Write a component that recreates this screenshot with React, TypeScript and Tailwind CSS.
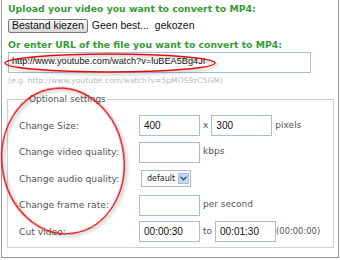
import React from "react";

const verdana = "font-['DejaVu_Sans',Verdana,sans-serif]";
const arial = "font-['Liberation_Sans',Arial,sans-serif]";

function Field({ value = "", className = "" }: { value?: string; className?: string }) {
    return (
        <div
            className={`h-[21px] w-[61px] border border-[#a7bcd6] bg-white px-[4px] flex items-center text-[10px] text-[#111] ${arial} ${className}`}
        >
            {value}
        </div>
    );
}

function Row({ label, children }: { label: string; children: React.ReactNode }) {
    return (
        <div className="flex items-center h-[26.5px]">
            <div className={`w-[120px] text-[9.2px] text-[#555] ${verdana}`}>{label}</div>
            <div className={`flex items-center gap-[3px] text-[9px] text-[#555] ${verdana}`}>{children}</div>
        </div>
    );
}

export default function App() {
    return (
        <div className="relative w-[340px] h-[260px] bg-white overflow-hidden">
            <div className="mx-[1px] h-[258px] border-x border-b border-[#9a9a9a] pl-[6px] pr-[4px]">
                <h2 className={`pt-[3px] text-[9.3px] font-bold leading-[12px] text-[#359a35] ${verdana}`}>
                    Upload your video you want to convert to MP4:
                </h2>
                <div className="mt-[3px] flex items-center gap-[4px]">
                    <button
                        className={`h-[14px] px-[3px] rounded-[2px] border border-[#777] bg-gradient-to-b from-[#fafafa] to-[#d8d8d8] text-[10.5px] leading-[11px] text-[#111] ${arial}`}
                    >
                        Bestand kiezen
                    </button>
                    <span className={`text-[10.5px] text-[#111] ${arial}`}>
                        Geen best...&nbsp;&nbsp;gekozen
                    </span>
                </div>
                <h2 className={`mt-[5px] text-[9.3px] font-bold leading-[12px] text-[#359a35] ${verdana}`}>
                    Or enter URL of the file you want to convert to MP4:
                </h2>
                <div
                    className={`mt-[1px] h-[21px] w-[303px] border border-[#a7bcd6] px-[3px] flex items-center text-[9.2px] text-[#111] ${arial}`}
                >
                    http://www.youtube.com/watch?v=luBEA5Bg4JI
                </div>
                <div className={`mt-[3px] text-[7.6px] leading-[9px] text-[#bbb] ${verdana}`}>
                    (e.g. http://www.youtube.com/watch?v=5pMOS9zC5GM)
                </div>

                <fieldset className="mt-[8px] -ml-[1px] w-[327px] h-[155px] border border-[#cfcfcf] px-[11px] pt-[6px]">
                    <legend className={`ml-[9px] px-[1px] text-[9px] text-[#555] ${verdana}`}>Optional settings</legend>
                    <Row label="Change Size:">
                        <Field value="400" />
                        <span>x</span>
                        <Field value="300" />
                        <span>pixels</span>
                    </Row>
                    <Row label="Change video quality:">
                        <Field />
                        <span>kbps</span>
                    </Row>
                    <Row label="Change audio quality:">
                        <div className="ml-[2px] h-[17px] w-[50px] border border-[#a7bcd6] flex items-center justify-between pl-[5px] pr-[1px]">
                            <span className={`text-[8px] text-[#222] ${verdana}`}>default</span>
                            <span className="w-[11px] h-[11px] bg-[#c5d5f0] border border-[#a9bde0] flex items-center justify-center">
                                <svg width="7" height="5" viewBox="0 0 7 5">
                                    <path d="M0.5 0.8 L3.5 3.8 L6.5 0.8" fill="none" stroke="#2a4d8f" strokeWidth="1.4" />
                                </svg>
                            </span>
                        </div>
                    </Row>
                    <Row label="Change frame rate:">
                        <Field />
                        <span>per second</span>
                    </Row>
                    <Row label="Cut video:">
                        <Field value="00:00:30" />
                        <span>to</span>
                        <Field value="00:01:30" />
                        <span className="-ml-[3px] text-[8.4px]">(00:00:00)</span>
                    </Row>
                </fieldset>
            </div>

            <svg className="absolute inset-0 pointer-events-none" width="340" height="260">
                <defs>
                    <filter id="sh" x="-20%" y="-20%" width="140%" height="140%">
                        <feDropShadow dx="2" dy="2" stdDeviation="1.5" floodColor="#000" floodOpacity="0.3" />
                    </filter>
                </defs>
                <ellipse cx="110" cy="63" rx="105" ry="9" fill="none" stroke="#e01010" strokeWidth="1.5" filter="url(#sh)" />
                <ellipse cx="63" cy="161" rx="61" ry="73" fill="none" stroke="#e01010" strokeWidth="1.5" filter="url(#sh)" transform="rotate(-8 63 161)" />
            </svg>
        </div>
    );
}
